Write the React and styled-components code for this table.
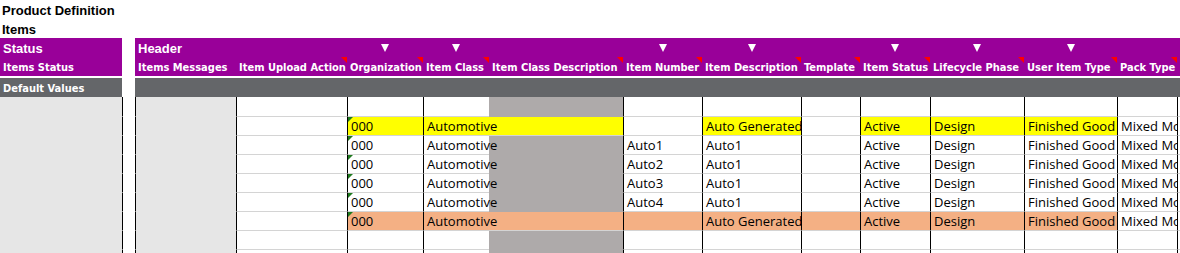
import React from "react";
import styled, { createGlobalStyle } from "styled-components";

const PURPLE = "#990099";
const BAND = "#646669";
const PANEL = "#e6e6e6";
const SHADE = "#aeaaaa";
const GRID = "#d4d4d4";

const columns = [
  { key: "status", width: 122, label: "Items Status", bg: PANEL },
  { key: "gap", width: 13, edge: true, blank: true },
  { key: "messages", width: 101, label: "Items Messages", edge: true, bg: PANEL },
  { key: "action", width: 111, label: "Item Upload Action", note: true, edge: true, grid: true },
  { key: "org", width: 76, label: "Organization", note: true, drop: true, edge: true, grid: true, flag: true },
  { key: "cls", width: 66, label: "Item Class", note: true, drop: true, edge: true, grid: true, spill: true },
  { key: "clsDesc", width: 134, label: "Item Class Description", note: true, bg: SHADE },
  { key: "number", width: 79, label: "Item Number", note: true, drop: true, edge: true, grid: true },
  { key: "desc", width: 99, label: "Item Description", note: true, drop: true, edge: true, grid: true },
  { key: "template", width: 59, label: "Template", note: true, edge: true, grid: true },
  { key: "itemStatus", width: 70, label: "Item Status", note: true, drop: true, edge: true, grid: true },
  { key: "phase", width: 94, label: "Lifecycle Phase", note: true, drop: true, edge: true, grid: true },
  { key: "userType", width: 93, label: "User Item Type", note: true, drop: true, edge: true, grid: true },
  { key: "pack", width: 60, label: "Pack Type", note: true, edge: true, grid: true },
  { key: "end", width: 3, edge: true, grid: true },
];

const template = columns.map((c) => `${c.width}px`).join(" ");

const line = (n) => ({
  org: "000",
  cls: "Automotive",
  number: `Auto${n}`,
  desc: "Auto1",
  itemStatus: "Active",
  phase: "Design",
  userType: "Finished Good",
  pack: "Mixed Model",
});

const rows = [
  {},
  {
    fill: "#ffff00",
    filled: ["org", "cls", "clsDesc", "desc", "itemStatus", "phase", "userType"],
    ...line(0),
    number: "",
    desc: "Auto Generated",
  },
  line(1),
  line(2),
  line(3),
  line(4),
  {
    fill: "#f4b084",
    filled: ["org", "cls", "clsDesc", "number", "desc", "template", "itemStatus", "phase", "userType"],
    ...line(0),
    number: "",
    desc: "Auto Generated",
  },
  {},
  {},
];

function App() {
  return (
    <>
      <GlobalStyle />
      <Page>
        <Title $h={20}>Product Definition</Title>
        <Title $h={19}>Items</Title>

        <Row $h={19}>
          {columns.map((c) => (
            <HeadCell key={c.key} $blank={c.blank} $spill>
              {c.key === "status" && <Caption>Status</Caption>}
              {c.key === "messages" && <Caption>Header</Caption>}
              {c.drop && <DropArrow />}
            </HeadCell>
          ))}
        </Row>
        <Row $h={19}>
          {columns.map((c) => (
            <HeadCell key={c.key} $blank={c.blank}>
              {c.label && <Label>{c.label}</Label>}
              {c.note && <Note />}
            </HeadCell>
          ))}
        </Row>

        <Band>
          {columns.map((c) => (
            <BandCell key={c.key} $blank={c.blank}>
              {c.key === "status" && <Label>Default Values</Label>}
            </BandCell>
          ))}
        </Band>

        {rows.map((r, i) => (
          <Row key={i} $h={i === 0 ? 20 : 19}>
            {columns.map((c) => {
              const filled = r.filled && r.filled.includes(c.key);
              const value = r[c.key];
              return (
                <Cell
                  key={c.key}
                  $bg={filled ? r.fill : c.bg}
                  $edge={c.edge}
                  $grid={c.grid || filled}
                  $spill={c.spill}
                >
                  {c.flag && value && <Flag />}
                  {value}
                </Cell>
              );
            })}
          </Row>
        ))}
      </Page>
    </>
  );
}

export default App;

const GlobalStyle = createGlobalStyle`
  html, body {
    margin: 0;
    padding: 0;
    background: #fff;
    overflow: hidden;
  }
  body {
    font-family: "Liberation Sans", Arial, sans-serif;
  }
`;

const Page = styled.div`
  width: 1180px;
  height: 253px;
  overflow: hidden;
  display: flex;
  flex-direction: column;
`;

const Title = styled.div`
  height: ${(p) => p.$h}px;
  padding: 2px 0 0 2px;
  box-sizing: border-box;
  font-size: 13px;
  font-weight: bold;
  line-height: 17px;
  color: #000;
`;

const Row = styled.div`
  display: grid;
  grid-template-columns: ${template};
  height: ${(p) => p.$h}px;
  flex: none;
`;

const HeadCell = styled.div`
  position: relative;
  display: flex;
  align-items: center;
  justify-content: ${(p) => (p.$spill ? "center" : "flex-start")};
  background: ${(p) => (p.$blank ? "#fff" : PURPLE)};
  color: #fff;
  white-space: nowrap;
  overflow: visible;
  z-index: ${(p) => (p.$spill ? 1 : 0)};
`;

const Caption = styled.span`
  position: absolute;
  left: 3px;
  top: 2px;
  font-size: 13px;
  font-weight: bold;
  line-height: 17px;
`;

const Label = styled.span`
  align-self: flex-start;
  padding: 3px 0 0 3px;
  font-family: "DejaVu Sans Condensed", "DejaVu Sans", sans-serif;
  font-stretch: condensed;
  font-size: 11px;
  font-weight: bold;
  line-height: 16px;
  color: #fff;
  white-space: nowrap;
`;

const DropArrow = styled.span`
  width: 0;
  height: 0;
  margin-top: 1px;
  border-left: 4px solid transparent;
  border-right: 4px solid transparent;
  border-top: 8px solid #fff;
`;

const Note = styled.span`
  position: absolute;
  top: 0;
  right: 0;
  width: 0;
  height: 0;
  border-top: 6px solid #ff0000;
  border-left: 6px solid transparent;
`;

const Band = styled(Row)`
  height: 19px;
  margin-top: 2px;
`;

const BandCell = styled.div`
  display: flex;
  background: ${(p) => (p.$blank ? "#fff" : BAND)};
  border-bottom: 1px solid ${(p) => (p.$blank ? "#fff" : "#a3a3a3")};
`;

const Cell = styled.div`
  position: relative;
  box-sizing: border-box;
  padding: 0 0 1px 3px;
  background: ${(p) => p.$bg || "#fff"};
  border-left: ${(p) => (p.$edge ? "1px solid #000" : "none")};
  border-bottom: 1px solid ${(p) => (p.$grid ? GRID : p.$bg || "#fff")};
  font-family: "Open Sans", "Noto Sans", sans-serif;
  font-size: 13px;
  line-height: 16px;
  display: flex;
  align-items: flex-end;
  color: #000;
  white-space: nowrap;
  overflow: ${(p) => (p.$spill ? "visible" : "hidden")};
  z-index: ${(p) => (p.$spill ? 1 : 0)};
`;

const Flag = styled.span`
  position: absolute;
  top: 0;
  left: 0;
  width: 0;
  height: 0;
  border-top: 5px solid #1f7a1f;
  border-right: 5px solid transparent;
`;
